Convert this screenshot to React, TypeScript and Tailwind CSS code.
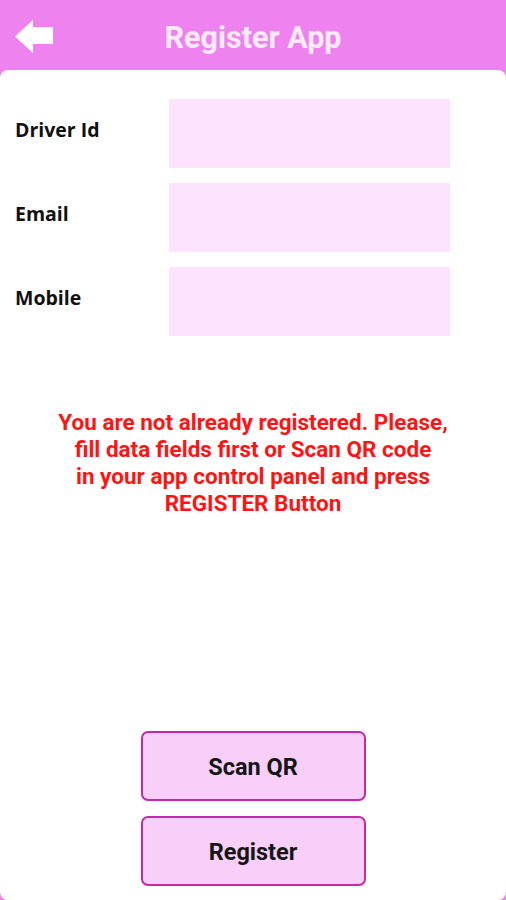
const fields = ["Driver Id", "Email", "Mobile"];

export default function App() {
  return (
    <div className="w-[506px] h-[900px] bg-[#ee82ee] flex flex-col overflow-hidden font-['Roboto',sans-serif]">
      {/* Header */}
      <header className="h-[70px] shrink-0 relative flex items-center justify-center">
        <button className="absolute left-[15px] top-[20px]">
          <svg width="39" height="33" viewBox="0 0 39 33">
            <path d="M0 16.5 L18 0 L18 7 L38 7 L38 24 L18 24 L18 33 Z" fill="#fff" />
          </svg>
        </button>
        <h1 className="mt-[6px] text-[30.5px] font-bold text-[#fdeafd]">Register App</h1>
      </header>

      {/* Card */}
      <main className="flex-1 bg-white rounded-[8px] flex flex-col">
        <div className="flex flex-col gap-[15px] pt-[29px] pr-[56px]">
          {fields.map((f) => (
            <div key={f} className="flex items-center">
              <label className="w-[169px] pl-[15px] -mt-[8px] text-[19.5px] font-bold text-[#111] font-['Open_Sans',sans-serif]">
                {f}
              </label>
              <input className="flex-1 h-[69px] bg-[#fde3fd] outline-none px-3" />
            </div>
          ))}
        </div>

        <p className="mt-[73px] text-center text-[22.5px] leading-[27px] font-bold text-[#ff1414] px-[20px]">
          You are not already registered. Please,
          <br />
          fill data fields first or Scan QR code
          <br />
          in your app control panel and press
          <br />
          REGISTER Button
        </p>

        <div className="mt-auto mb-[14px] flex flex-col items-center gap-[15px]">
          {["Scan QR", "Register"].map((b) => (
            <button
              key={b}
              className="w-[225px] h-[70px] pt-[4px] rounded-[7px] border-2 border-[#c42aa8] bg-[#f8cff8] text-[23.5px] font-bold text-[#161616]"
            >
              {b}
            </button>
          ))}
        </div>
      </main>
    </div>
  );
}
